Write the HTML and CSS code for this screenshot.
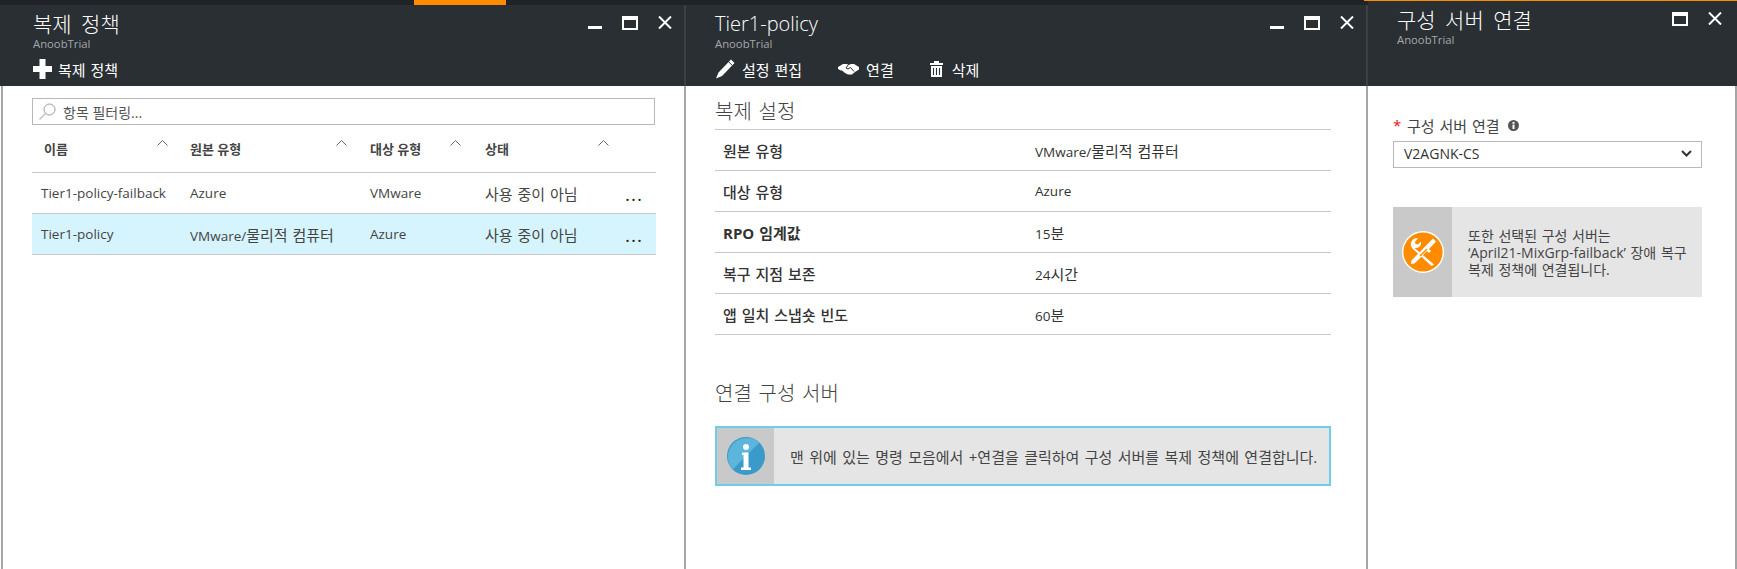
FILE: index.html
```html
<!DOCTYPE html>
<html lang="ko">
<head>
  <meta charset="UTF-8">
  <title>복제 정책</title>
  <link rel="stylesheet" href="styles.css">
</head>
<body>
  <div class="blades">

    <section class="blade blade-list">
      <div class="strip"><span class="strip-active"></span></div>
      <header class="head">
        <div class="head-top">
          <div class="titles">
            <h1 class="title-ko">복제 정책</h1>
            <p>AnoobTrial</p>
          </div>
          <div class="controls">
            <svg class="ctl-min" width="14" height="3" viewBox="0 0 14 3"><rect width="14" height="3" fill="#fff"/></svg>
            <svg class="ctl-max" width="16" height="14" viewBox="0 0 16 14"><path d="M0 0h16v14H0zM2 4v8h12V4z" fill="#fff" fill-rule="evenodd"/></svg>
            <svg class="ctl-close" width="14" height="13" viewBox="0 0 14 13"><path d="M1 .5l12 12M13 .5l-12 12" stroke="#fff" stroke-width="2"/></svg>
          </div>
        </div>
        <div class="commands">
          <a class="cmd ko">
            <svg width="19" height="20" viewBox="0 0 19 20"><path d="M6.500 0h6v7H19v6h-6.500v7h-6v-7H0V7h6.500z" fill="#fff"/></svg>
            복제 정책
          </a>
        </div>
      </header>
      <div class="body body-list">
        <div class="filter">
          <svg width="17" height="17" viewBox="0 0 17 17"><circle cx="10.500" cy="6.500" r="5.500" fill="none" stroke="#9a9a9a"/><path d="M6.500 10.500L.5 16.500" stroke="#c4c4c4" stroke-width="1.500"/></svg>
          <span class="filter-text">항목 필터링...</span>
        </div>
        <div class="grid grid-head">
          <div class="th th-name">이름<svg class="caret" width="11" height="6" viewBox="0 0 11 6"><path d="M.5 5.500l5-5 5 5" fill="none" stroke="#666"/></svg></div>
          <div class="th">원본 유형<svg class="caret" width="11" height="6" viewBox="0 0 11 6"><path d="M.5 5.500l5-5 5 5" fill="none" stroke="#666"/></svg></div>
          <div class="th">대상 유형<svg class="caret" width="11" height="6" viewBox="0 0 11 6"><path d="M.5 5.500l5-5 5 5" fill="none" stroke="#666"/></svg></div>
          <div class="th">상태<svg class="caret" width="11" height="6" viewBox="0 0 11 6"><path d="M.5 5.500l5-5 5 5" fill="none" stroke="#666"/></svg></div>
        </div>
        <div class="grid grid-row">
          <div class="td-name">Tier1-policy-failback</div>
          <div>Azure</div>
          <div>VMware</div>
          <div class="td-state"><span class="ko">사용 중이 아님</span><span class="dots">...</span></div>
        </div>
        <div class="grid grid-row selected">
          <div class="td-name">Tier1-policy</div>
          <div>VMware/<span class="ko">물리적 컴퓨터</span></div>
          <div>Azure</div>
          <div class="td-state"><span class="ko">사용 중이 아님</span><span class="dots">...</span></div>
        </div>
      </div>
    </section>

    <section class="blade blade-detail">
      <div class="strip"></div>
      <header class="head">
        <div class="head-top">
          <div class="titles">
            <h1>Tier1-policy</h1>
            <p>AnoobTrial</p>
          </div>
          <div class="controls">
            <svg class="ctl-min" width="14" height="3" viewBox="0 0 14 3"><rect width="14" height="3" fill="#fff"/></svg>
            <svg class="ctl-max" width="16" height="14" viewBox="0 0 16 14"><path d="M0 0h16v14H0zM2 4v8h12V4z" fill="#fff" fill-rule="evenodd"/></svg>
            <svg class="ctl-close" width="14" height="13" viewBox="0 0 14 13"><path d="M1 .5l12 12M13 .5l-12 12" stroke="#fff" stroke-width="2"/></svg>
          </div>
        </div>
        <div class="commands commands-detail">
          <a class="cmd ko cmd-edit">
            <svg width="19" height="20" viewBox="0 0 19 20"><path d="M15 .5l3.500 3.500L6 17 0 19.500 2.500 13.500z" fill="#fff"/><path d="M12.800 3l3.500 3.500" stroke="#2a2f33"/></svg>
            설정 편집
          </a>
          <a class="cmd ko cmd-link">
            <svg width="21" height="12" viewBox="0 0 21 12"><path d="M0 4l5-3h4l1.500 1L13 1h3l5 3v2.500l-4 2.500-3 2.500h-4l-3-1.500-3-2.500H3L0 6z" fill="#fff"/><path d="M10.500 1.500L8 5l2 1 2.500-1.500 3.500 4" fill="none" stroke="#2a2f33"/></svg>
            연결
          </a>
          <a class="cmd ko cmd-del">
            <svg width="13" height="16" viewBox="0 0 13 16"><path d="M0 2h4V0h5v2h4v2H0zM1 5h11v11H1z" fill="#fff"/><path d="M3.500 7v7M6.500 7v7M9.500 7v7" stroke="#2a2f33" stroke-width="1.100"/></svg>
            삭제
          </a>
        </div>
      </header>
      <div class="body body-detail">
        <h2 class="section-title">복제 설정</h2>
        <div class="props">
          <div class="prop"><span class="prop-label ko">원본 유형</span><span>VMware/<span class="ko">물리적 컴퓨터</span></span></div>
          <div class="prop"><span class="prop-label ko">대상 유형</span><span>Azure</span></div>
          <div class="prop"><span class="prop-label ko strong">RPO 임계값</span><span>15<span class="ko">분</span></span></div>
          <div class="prop"><span class="prop-label ko">복구 지점 보존</span><span>24<span class="ko">시간</span></span></div>
          <div class="prop"><span class="prop-label ko">앱 일치 스냅숏 빈도</span><span>60<span class="ko">분</span></span></div>
        </div>
        <h2 class="section-title section-second">연결 구성 서버</h2>
        <div class="notice notice-info">
          <div class="notice-icon">
            <svg width="38" height="38" viewBox="0 0 38 38"><circle cx="19" cy="19" r="19" fill="#3a9ac9"/><path d="M5.600 32.400A19 19 0 0 1 32.400 5.600z" fill="#5cb6dc"/><circle cx="19" cy="10" r="3" fill="#fff"/><path d="M15 15.500h6.500v15H24V33H14v-2.500h2.500V18H15z" fill="#fff"/></svg>
          </div>
          <p class="ko">맨 위에 있는 명령 모음에서 +연결을 클릭하여 구성 서버를 복제 정책에 연결합니다.</p>
        </div>
      </div>
    </section>

    <section class="blade blade-config">
      <header class="head">
        <div class="head-top">
          <div class="titles">
            <h1 class="title-ko">구성 서버 연결</h1>
            <p>AnoobTrial</p>
          </div>
          <div class="controls">
            <svg class="ctl-max" width="16" height="14" viewBox="0 0 16 14"><path d="M0 0h16v14H0zM2 4v8h12V4z" fill="#fff" fill-rule="evenodd"/></svg>
            <svg class="ctl-close" width="14" height="13" viewBox="0 0 14 13"><path d="M1 .5l12 12M13 .5l-12 12" stroke="#fff" stroke-width="2"/></svg>
          </div>
        </div>
      </header>
      <div class="body body-config">
        <div class="field-label">
          <span class="req">*</span>
          <span class="ko">구성 서버 연결</span>
          <svg width="11" height="11" viewBox="0 0 11 11"><circle cx="5.500" cy="5.500" r="5.500" fill="#555"/><rect x="4.500" y="2" width="2" height="1.800" fill="#fff"/><rect x="4.500" y="4.600" width="2" height="4.400" fill="#fff"/></svg>
        </div>
        <div class="select">
          <span>V2AGNK-CS</span>
          <svg width="11" height="7" viewBox="0 0 11 7"><path d="M1 1l4.500 4.500L10 1" fill="none" stroke="#333" stroke-width="2"/></svg>
        </div>
        <div class="notice notice-warn">
          <div class="notice-icon">
            <svg width="42" height="42" viewBox="0 0 42 42">
              <circle cx="21" cy="21" r="20.300" fill="#ff8c00" stroke="#fff" stroke-width="1.400"/>
              <path d="M31 8l3 3-7 7.500 2 2-2 2-2-2L12.500 33 9 33.500 9.500 30z" fill="#fff" transform="translate(0 -.5)"/>
              <path d="M9 12.500a5.500 5.500 0 0 1 7-5l-3 3 .5 2.500 2.500.5 3-3a5.500 5.500 0 0 1-6.500 6.500L32 33.500 29.500 35 10.500 17.500A5.500 5.500 0 0 1 9 12.500z" fill="#fff"/>
              <path d="M18 25l7-7" stroke="#ff8c00" stroke-width="1.500"/>
            </svg>
          </div>
          <p>또한 선택된 구성 서버는<br>‘April21-MixGrp-failback’ 장애 복구<br>복제 정책에 연결됩니다.</p>
        </div>
      </div>
    </section>

  </div>
</body>
</html>
```

FILE: styles.css
```css
* {
  box-sizing: border-box;
}
html, body {
  height: 100%;
}
body {
  margin: 0;
  background: #fff;
  color: #333;
  font-family: "Open Sans", "Noto Sans CJK KR", sans-serif;
  font-size: 13.5px;
  overflow: hidden;
}
h1, h2, p {
  margin: 0;
  font-weight: normal;
}
/* hangul runs wider than the latin text next to it */
.ko {
  font-size: 15px;
  word-spacing: 1px;
}

.blades {
  display: flex;
  height: 569px;
}
.blade {
  position: relative;
  display: flex;
  flex-direction: column;
  border-right: 2px solid #a6a6a6;
}
.blade-list {
  width: 686px;
}
.blade-detail {
  width: 682px;
}
.blade-config {
  width: 369px;
}
/* orange hairline runs a little past the blade edge */
.blade-config::before {
  content: "";
  position: absolute;
  top: 0;
  left: -4px;
  right: -2px;
  height: 1px;
  background: #ff8c00;
}

.strip {
  height: 5px;
  margin-right: -2px;
  background: #1f2328;
}
.strip-active {
  display: block;
  width: 92px;
  height: 5px;
  margin-left: 414px;
  background: #ff8c00;
}

.head {
  flex: none;
  height: 81px;
  margin-right: -2px;
  padding: 6px 12px 0 33px;
  background: #2a2f33;
  border-right: 2px solid #3c4146;
}
.blade-detail .head {
  padding-left: 29px;
}
.blade-config .head {
  height: 86px;
  padding: 7px 15px 0 29px;
  border-right: 0;
}
.head-top {
  display: flex;
  justify-content: space-between;
  align-items: flex-start;
}
.titles h1 {
  color: #fff;
  font-size: 20px;
  font-weight: 300;
  line-height: 26px;
}
.titles .title-ko {
  font-size: 21px;
  word-spacing: 4px;
}
.titles p {
  color: #a4a8ab;
  font-size: 11.300px;
  line-height: 14px;
}
.controls {
  display: flex;
  align-items: flex-start;
  gap: 20px;
  padding-top: 5px;
}
.ctl-min {
  margin-top: 10px;
}

.commands {
  display: flex;
  margin-top: 6px;
}
.commands-detail {
  padding-left: 1px;
}
.cmd {
  display: flex;
  align-items: center;
  height: 24px;
  gap: 6px;
  color: #fff;
}
.cmd-edit {
  gap: 7px;
  margin-right: 36px;
}
.cmd-link {
  gap: 7px;
  margin-right: 36px;
}
.cmd-del {
  gap: 9px;
}

.body-list {
  flex: 1;
  margin-left: 1px;
  padding: 12px 29px 0 29px;
  border-left: 2px solid #a6a6a6;
}
.filter {
  display: flex;
  align-items: center;
  gap: 7px;
  height: 27px;
  padding-left: 6px;
  border: 1px solid #b8b8b8;
  color: #555;
}
.filter-text {
  font-size: 14px;
}
.grid {
  display: grid;
  grid-template-columns: 158px 180px 115px 1fr;
  align-items: center;
  width: 624px;
}
.grid-head {
  height: 48px;
  border-bottom: 1px solid #c8c8c8;
}
.th {
  position: relative;
  font-size: 13px;
  font-weight: 700;
  color: #444;
}
.th-name {
  padding-left: 12px;
}
.caret {
  position: absolute;
  top: 1px;
  left: 125px;
}
.th:nth-child(2) .caret {
  left: 146px;
}
.th:nth-child(3) .caret {
  left: 80px;
}
.th:nth-child(4) .caret {
  left: 113px;
}
.grid-row {
  height: 41px;
  border-bottom: 1px solid #c8c8c8;
  color: #444;
}
.selected {
  background: #d6f4fd;
}
.td-name {
  padding-left: 9px;
}
.td-state {
  display: flex;
  justify-content: space-between;
  padding-right: 13px;
}
.dots {
  margin-top: 1px;
  color: #222;
  font-size: 19px;
  letter-spacing: 1px;
  line-height: 20px;
}

.body-detail {
  padding: 14px 35px 0 29px;
}
.section-title {
  color: #444;
  font-size: 20px;
  font-weight: 300;
  line-height: 24px;
  word-spacing: 1.500px;
}
.props {
  margin-top: 5px;
  border-top: 1px solid #c8c8c8;
}
.prop {
  display: flex;
  align-items: center;
  height: 41px;
  border-bottom: 1px solid #c8c8c8;
}
.prop-label {
  width: 320px;
  padding-left: 8px;
  font-weight: 500;
}
.strong {
  font-weight: 700;
}
.section-second {
  margin-top: 47px;
}

.notice {
  display: flex;
  align-items: center;
  background: #e5e5e5;
  color: #444;
}
.notice-icon {
  display: flex;
  flex: none;
  align-items: center;
  justify-content: center;
  align-self: stretch;
  background: #c9c9c9;
}
.notice-info {
  height: 60px;
  margin-top: 20px;
  border: 2px solid #70cdea;
}
.notice-info .notice-icon {
  width: 57px;
}
.notice-info p {
  padding-left: 16px;
  white-space: nowrap;
  word-spacing: 1.500px;
}
.notice-warn {
  height: 90px;
  margin-top: 39px;
}
.notice-warn .notice-icon {
  width: 59px;
}
.notice-warn p {
  padding-left: 16px;
  font-size: 14px;
  line-height: 17px;
  white-space: nowrap;
  word-spacing: 1px;
}

.body-config {
  flex: 1;
  padding: 30px 33px 0 25px;
}
.field-label {
  display: flex;
  align-items: center;
  height: 18px;
  color: #444;
}
.field-label svg {
  margin-left: 8px;
}
.req {
  width: 14px;
  color: #e81123;
  font-size: 15px;
  line-height: 18px;
}
.select {
  display: flex;
  align-items: center;
  justify-content: space-between;
  height: 27px;
  margin-top: 7px;
  padding: 0 9px 2px 10px;
  border: 1px solid #b8b8b8;
  font-size: 14px;
}
```
